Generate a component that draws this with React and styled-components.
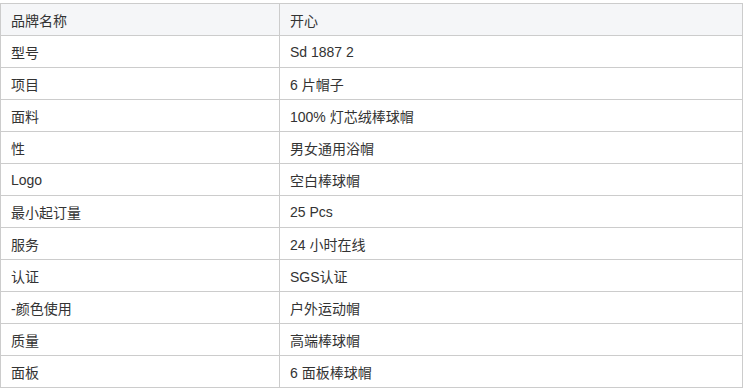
import React from 'react'
import styled, { createGlobalStyle } from 'styled-components'

const GlobalStyle = createGlobalStyle`
  body {
    margin: 0;
    background: #fff;
    font-family: 'Liberation Sans', 'Noto Sans CJK SC', sans-serif;
  }
`

const rows = [
  ['型号', 'Sd 1887 2'],
  ['项目', '6 片帽子'],
  ['面料', '100% 灯芯绒棒球帽'],
  ['性', '男女通用浴帽'],
  ['Logo', '空白棒球帽'],
  ['最小起订量', '25 Pcs'],
  ['服务', '24 小时在线'],
  ['认证', 'SGS认证'],
  ['-颜色使用', '户外运动帽'],
  ['质量', '高端棒球帽'],
  ['面板', '6 面板棒球帽'],
]

const Wrapper = styled.div`
  padding-top: 3px;
`

const Table = styled.table`
  width: 743px;
  border-collapse: collapse;
  table-layout: fixed;
  font-size: 14px;
  color: #333;
`

const Row = styled.tr`
  height: 32px;
  background: ${(p) => (p.$head ? '#f5f6f8' : '#fff')};
`

const Cell = styled.td`
  border: 1px solid #cccccc;
  padding: 0 10px;
  vertical-align: middle;
  white-space: nowrap;
  &:first-child {
    width: 258px;
  }
`

const App = () => {
  return (
    <Wrapper>
      <GlobalStyle />
      <Table>
        <tbody>
          <Row $head>
            <Cell>品牌名称</Cell>
            <Cell>开心</Cell>
          </Row>
          {rows.map(([k, v]) => (
            <Row key={k}>
              <Cell>{k}</Cell>
              <Cell>{v}</Cell>
            </Row>
          ))}
        </tbody>
      </Table>
    </Wrapper>
  )
}

export default App
